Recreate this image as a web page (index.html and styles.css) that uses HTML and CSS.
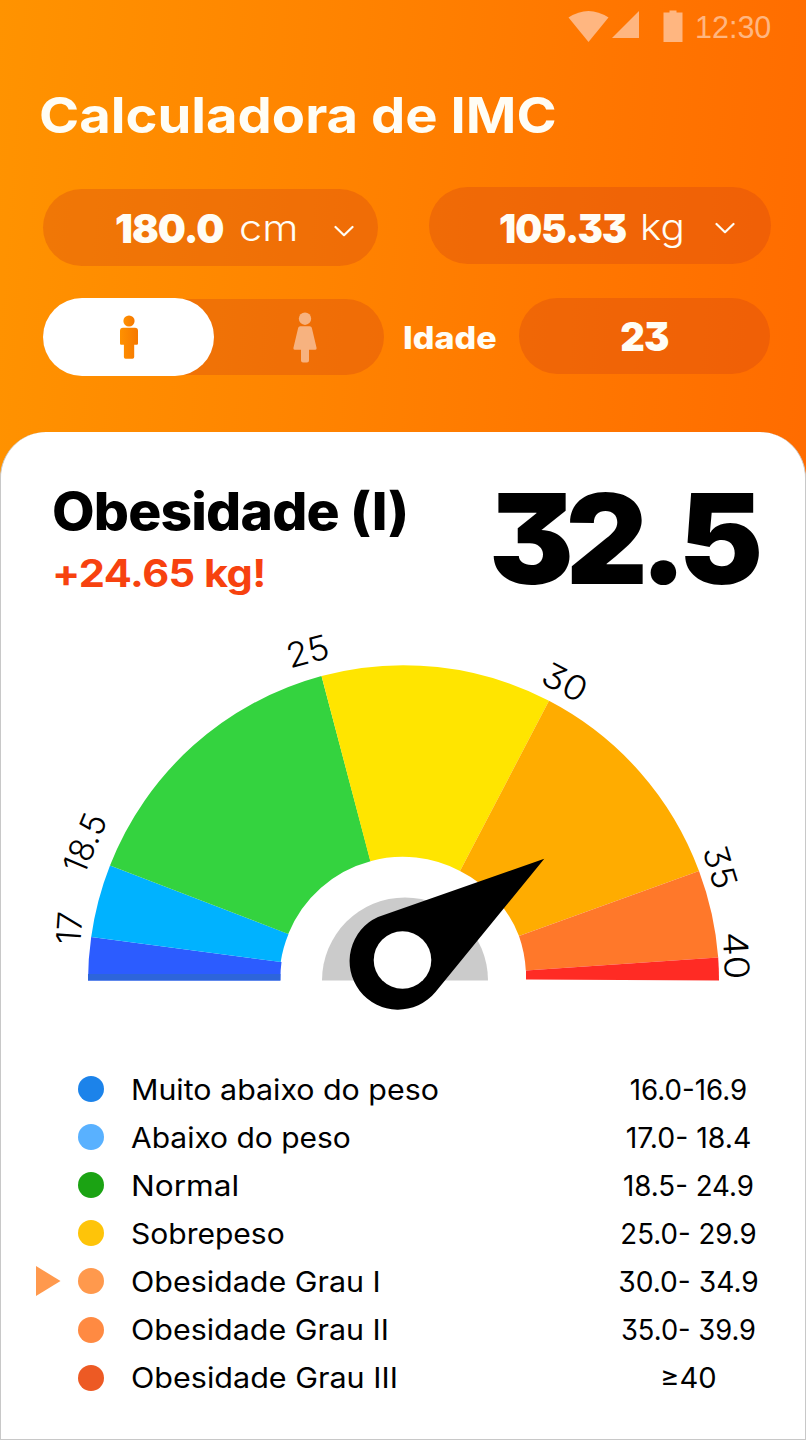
FILE: index.html
```html
<!DOCTYPE html>
<html lang="pt">
<head>
<meta charset="utf-8">
<title>Calculadora de IMC</title>
<link rel="stylesheet" href="styles.css">
</head>
<body>
<main class="screen">
  <header class="header">
    <div class="status">
      <svg class="status-icons" width="120" height="36" viewBox="566 8 120 36">
        <path d="M568.5 17.5Q588.500 4.500 608.500 17.500L588.500 42Z"/>
        <path d="M612 38H639V11Z"/>
        <path d="M663.500 12.500H669.500V10.500H676.500V12.500H682.500V42H663.500Z"/>
      </svg>
      <span class="clock">12:30</span>
    </div>
    <h1 class="title">Calculadora de IMC</h1>
    <div class="row measures">
      <div class="pill height">
        <span class="value value-height">180.0</span>
        <span class="unit unit-cm">cm</span>
        <svg class="chevron" width="20" height="12" viewBox="0 0 20 12"><path d="M1.500 2L10 10.200L18.500 2"/></svg>
      </div>
      <div class="pill weight">
        <span class="value value-weight">105.33</span>
        <span class="unit unit-kg">kg</span>
        <svg class="chevron" width="20" height="12" viewBox="0 0 20 12"><path d="M1.500 2L10 10.200L18.500 2"/></svg>
      </div>
    </div>
    <div class="row profile">
      <div class="toggle">
        <div class="option selected">
          <svg width="18" height="44" viewBox="0 0 18 44">
            <defs><linearGradient id="man"><stop offset="0" stop-color="#ff9100"/><stop offset="1" stop-color="#f67800"/></linearGradient></defs>
            <g fill="url(#man)">
              <circle cx="9" cy="6" r="5.600"/>
              <path d="M3 12.800H15Q18 12.800 18 15.800V28.500Q18 29.700 16.800 29.700H14.200V42Q14.200 43.700 12.500 43.700H5.500Q3.900 43.700 3.900 42V29.700H1.200Q0 29.700 0 28.500V15.800Q0 12.800 3 12.800Z"/>
            </g>
          </svg>
        </div>
        <div class="option">
          <svg width="24" height="51" viewBox="0 0 24 51">
            <g fill="#f7b27f">
              <circle cx="12" cy="6.700" r="6.200"/>
              <path d="M7.200 14.200H16.800Q18.400 14.200 18.800 15.800L23.600 36Q23.900 37.700 22.300 37.700H16V48.500Q16 50.500 14 50.500H10Q8 50.500 8 48.500V37.700H1.700Q.1 37.700 .4 36L5.200 15.800Q5.600 14.200 7.200 14.200Z"/>
            </g>
          </svg>
        </div>
      </div>
      <span class="age-label">Idade</span>
      <div class="pill age"><span class="value value-age">23</span></div>
    </div>
  </header>

  <section class="card">
    <div class="summary">
      <div class="verdict">
        <h2 class="category">Obesidade (I)</h2>
        <p class="excess">+24.65 kg!</p>
      </div>
      <div class="score">32.5</div>
    </div>

    <svg class="gauge" width="806" height="400" viewBox="0 620 806 400">
      <g>
        <path fill="#2c5cff" d="M88 980.500A315.500 315.500 0 0 1 91.200 937L281.500 962A122.800 122.800 0 0 0 280.400 980.500Z"/>
        <path fill="#2d65da" d="M88 974H280.400V980.500H88Z"/>
        <path fill="#00b2ff" d="M91.200 937A315.500 315.500 0 0 1 110 865.500L288.500 934A122.800 122.800 0 0 0 280.700 962Z"/>
        <path fill="#34d33f" d="M110 865.500A315.500 315.500 0 0 1 321.500 676L370.500 861.200A122.800 122.800 0 0 0 288.200 934Z"/>
        <path fill="#ffe500" d="M321.500 676A315.500 315.500 0 0 1 549 700.800L460 871A122.800 122.800 0 0 0 370.300 861.200Z"/>
        <path fill="#ffac00" d="M549 700.800A315.500 315.500 0 0 1 699 871L519 936A122.800 122.800 0 0 0 460 871Z"/>
        <path fill="#ff782a" d="M699 871A315.500 315.500 0 0 1 718.200 957.500L525.800 970.500A122.800 122.800 0 0 0 519 936Z"/>
        <path fill="#ff2b24" d="M718.200 957.500Q719 969 719 980.500L526 979.500V970.500Z"/>
      </g>
      <path fill="#cbcbcb" d="M322 980.500A83 83 0 0 1 488 980.500Z"/>
      <path d="M544.300 858.800L378 917A48.500 48.500 0 1 0 435.500 992Z"/>
      <circle cx="402.500" cy="960" r="28.800" fill="#fff"/>
      <g class="ticks">
        <text transform="translate(69 928) rotate(-86)" y="12.400" textLength="33" lengthAdjust="spacingAndGlyphs">17</text>
        <text transform="translate(84.500 843) rotate(-67)" y="12.400" textLength="61" lengthAdjust="spacingAndGlyphs">18.5</text>
        <text transform="translate(307.500 651) rotate(-15)" y="12.400" textLength="43" lengthAdjust="spacingAndGlyphs">25</text>
        <text transform="translate(565 682) rotate(28)" y="12.400" textLength="46" lengthAdjust="spacingAndGlyphs">30</text>
        <text transform="translate(720.500 867) rotate(73)" y="12.400" textLength="43" lengthAdjust="spacingAndGlyphs">35</text>
        <text transform="translate(736.500 955.500) rotate(87)" y="12.400" textLength="48" lengthAdjust="spacingAndGlyphs">40</text>
      </g>
    </svg>

    <ul class="legend">
      <li class="item"><i class="dot severe"></i><span class="name n1">Muito abaixo do peso</span><span class="range r1">16.0-16.9</span></li>
      <li class="item"><i class="dot under"></i><span class="name n2">Abaixo do peso</span><span class="range r2">17.0- 18.4</span></li>
      <li class="item"><i class="dot normal"></i><span class="name n3">Normal</span><span class="range r3">18.5- 24.9</span></li>
      <li class="item"><i class="dot over"></i><span class="name n4">Sobrepeso</span><span class="range r4">25.0- 29.9</span></li>
      <li class="item current"><svg class="marker" width="25" height="30" viewBox="0 0 25 30"><path fill="#ff994d" d="M0 0L24.500 15L0 30Z"/></svg><i class="dot obese1"></i><span class="name n5">Obesidade Grau I</span><span class="range r5">30.0- 34.9</span></li>
      <li class="item"><i class="dot obese2"></i><span class="name n6">Obesidade Grau II</span><span class="range r6">35.0- 39.9</span></li>
      <li class="item"><i class="dot obese3"></i><span class="name n7">Obesidade Grau III</span><span class="range r7">≥40</span></li>
    </ul>
  </section>
</main>
</body>
</html>
```
FILE: styles.css
```css
* { box-sizing: border-box; }
body { margin: 0; font-family: Inter, "Open Sans", sans-serif; font-feature-settings: "cv09"; color: #000; }
h1, h2, p, ul { margin: 0; padding: 0; }
svg { display: block; flex: none; }
span, h1, h2, p { white-space: nowrap; }

.screen {
  width: 806px;
  height: 1440px;
  overflow: hidden;
  background: linear-gradient(94deg, #ff9300 0%, #ff8400 36%, #ff7500 70%, #ff6900 100%);
}

.header { height: 432px; color: #fffdf5; }

.status { display: flex; height: 52px; padding: 8px 0 0 566px; }
.status-icons { fill: #ffb680; }
.clock {
  margin-left: 9px;
  font: 30.500px/38px "Liberation Sans", Arial, sans-serif;
  color: #ffb680;
}

.title {
  margin: 33px 0 0 39px;
  font-size: 50px;
  font-weight: 700;
  line-height: 60px;
  transform: scaleX(1.087);
  transform-origin: left;
}

.row { display: flex; align-items: flex-start; padding-left: 43px; }
.measures { gap: 51px; margin-top: 42px; height: 77px; }
.profile { margin-top: 34px; }

.pill {
  display: flex;
  align-items: center;
  flex: none;
  height: 77px;
  border-radius: 39px;
  background: rgba(205, 65, 20, .31);
}
.height { width: 335px; margin-top: 2px; padding-left: 72px; }
.weight { width: 342px; padding-left: 70px; }
.age { width: 251px; height: 76px; justify-content: center; }

.value { font-size: 40px; font-weight: 900; line-height: 48px; letter-spacing: -1px; transform-origin: left; }
.value-height { width: 111px; transform: translateY(1px) scaleX(.99); }
.value-weight { width: 136px; transform: translateY(3px) scaleX(.95); }
.value-age { transform: translateY(1px) scaleX(.95); transform-origin: center; }

.unit { font-size: 36px; font-weight: 300; line-height: 48px; transform-origin: left; }
.unit-cm { width: 53px; margin-left: 13px; transform: scaleX(1.15); }
.unit-kg { width: 41px; margin-left: 5px; transform: translateY(1px) scaleX(1.12); }

.chevron { fill: none; stroke: #fffdf5; stroke-width: 2.200; stroke-linecap: round; stroke-linejoin: round; }
.height .chevron { margin: 6px 0 0 42px; }
.weight .chevron { margin: 5px 0 0 34px; }

.toggle {
  display: flex;
  flex: none;
  width: 341px;
  height: 76px;
  margin-top: 1px;
  border-radius: 38px;
  background: rgba(205, 65, 20, .31);
}
.option { display: flex; flex: none; width: 182px; height: 76px; align-items: center; justify-content: center; }
.selected { width: 171px; height: 78px; margin-top: -1px; border-radius: 39px; background: #fff; }
.option:last-child { padding-top: 1px; }

.age-label {
  flex: none;
  width: 93px;
  margin: 20px 23px 0 19px;
  font-size: 31px;
  font-weight: 800;
  line-height: 40px;
  transform: scaleX(1.100);
  transform-origin: left;
}

.card {
  height: 1008px;
  border: solid #c8c8c8;
  border-width: 0 1px 1px;
  border-radius: 46px 46px 0 0;
  background: #fff;
}

.summary { display: flex; height: 188px; }
.verdict { flex: none; width: 488px; padding: 50px 0 0 51px; }
.category {
  font-size: 52px;
  font-weight: 800;
  line-height: 60px;
  letter-spacing: -.8px;
  transform: scaleX(1.062);
  transform-origin: left;
}
.excess {
  margin-top: 6px;
  font-size: 38px;
  font-weight: 700;
  line-height: 50px;
  letter-spacing: -.5px;
  color: #f7420f;
  transform: scaleX(1.095);
  transform-origin: left;
}
.score {
  margin-top: 44px;
  font-size: 125px;
  font-weight: 900;
  line-height: 126px;
  letter-spacing: -8px;
  transform: scaleX(1.015);
  transform-origin: left;
}

.gauge { margin-left: -1px; }
.ticks { font-size: 34px; font-weight: 300; text-anchor: middle; }

.legend { margin-top: 45px; list-style: none; }
.item {
  display: flex;
  align-items: center;
  height: 48.100px;
  padding-left: 77px;
  font-size: 28px;
  line-height: 48px;
}
.current { padding-left: 35px; }
.marker { margin-right: 17px; }
.dot { flex: none; width: 26px; height: 26px; border-radius: 50%; }
.severe { background: #1c83ea; }
.under { background: #59b1ff; }
.normal { background: #1ba313; }
.over { background: #fec409; }
.obese1 { background: #ff994d; }
.obese2 { background: #ff8a42; }
.obese3 { background: #ed5a24; }

.name, .range { padding-top: 1.500px; }
.name { width: 457px; margin-left: 26.500px; transform-origin: left; }
.n1 { transform: scaleX(1.084); }
.n2 { transform: scaleX(1.070); }
.n3 { transform: scaleX(1.128); }
.n4 { transform: scaleX(1.072); }
.n5, .n6 { transform: scaleX(1.087); }
.n7 { transform: scaleX(1.090); }

.range { width: 201px; text-align: center; }
.r1 { transform: scaleX(.988); }
.r2 { transform: scaleX(1.016); }
.r3 { transform: scaleX(.988); }
.r4 { transform: scaleX(.987); }
.r5 { transform: scaleX(1.005); }
.r6 { transform: scaleX(.974); }
.r7 { transform: scaleX(1.040); }
```
